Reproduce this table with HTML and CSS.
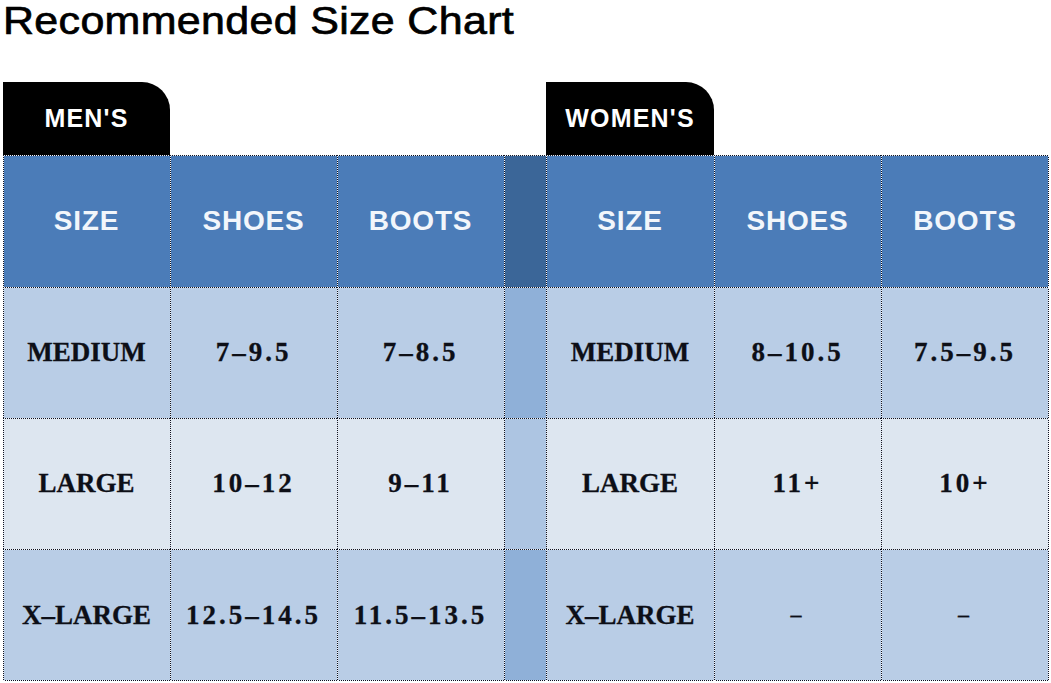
FILE: index.html
```html
<!DOCTYPE html>
<html>
<head>
<meta charset="utf-8">
<link rel="stylesheet" href="styles.css">
</head>
<body>
<h1 class="title">Recommended Size Chart</h1>
<div class="chart">
  <div class="tab tab-men">MEN'S</div>
  <div class="tab-gap"></div>
  <div class="tab tab-women">WOMEN'S</div>
  <div class="tab-gap-end"></div>

  <div class="cell head">SIZE</div>
  <div class="cell head">SHOES</div>
  <div class="cell head">BOOTS</div>
  <div class="cell div-head"></div>
  <div class="cell head">SIZE</div>
  <div class="cell head">SHOES</div>
  <div class="cell head edge">BOOTS</div>

  <div class="cell row-a">MEDIUM</div>
  <div class="cell row-a num">7–9.5</div>
  <div class="cell row-a num">7–8.5</div>
  <div class="cell div-a"></div>
  <div class="cell row-a">MEDIUM</div>
  <div class="cell row-a num">8–10.5</div>
  <div class="cell row-a num edge">7.5–9.5</div>

  <div class="cell row-b">LARGE</div>
  <div class="cell row-b num">10–12</div>
  <div class="cell row-b num">9–11</div>
  <div class="cell div-b"></div>
  <div class="cell row-b">LARGE</div>
  <div class="cell row-b num">11+</div>
  <div class="cell row-b num edge">10+</div>

  <div class="cell row-a last">X–LARGE</div>
  <div class="cell row-a last num">12.5–14.5</div>
  <div class="cell row-a last num">11.5–13.5</div>
  <div class="cell div-a last"></div>
  <div class="cell row-a last">X–LARGE</div>
  <div class="cell row-a last num dash">–</div>
  <div class="cell row-a last num dash edge">–</div>
</div>
</body>
</html>
```

FILE: styles.css
```css
html, body {
  margin: 0;
  padding: 0;
  background: #ffffff;
  overflow: hidden;
}

.title {
  margin: 0;
  padding: 2px 0 0 3px;
  width: max-content;
  font-family: "Liberation Sans", Arial, sans-serif;
  font-weight: normal;
  font-size: 38px;
  line-height: 38px;
  letter-spacing: 0.3px;
  color: #000;
  -webkit-text-stroke: 0.7px #000;
  height: 40px;
  box-sizing: border-box;
  transform: scaleX(1.13);
  transform-origin: 3px 0;
  white-space: nowrap;
}

.chart {
  margin: 42px 0 0 3px;
  display: grid;
  grid-template-columns: 167px 167px 167px 42px 168px 167px 168px;
  grid-template-rows: 73px 132px 131px 131px 132px;
  width: 1046px;
}

.tab {
  background: #000;
  color: #fff;
  border-top-right-radius: 28px;
  display: flex;
  align-items: center;
  justify-content: center;
  font-family: "Liberation Sans", Arial, sans-serif;
  font-weight: bold;
  font-size: 25px;
  letter-spacing: 1.2px;
  padding-bottom: 1px;
}

.tab-men { grid-column: 1; }
.tab-gap { grid-column: 2 / 5; }
.tab-women { grid-column: 5; }
.tab-gap-end { grid-column: 6 / 8; }

.cell {
  --bg: #b9cde6;
  --v: repeating-linear-gradient(to bottom, #0b1020 0 1px, #f4f6fa 1px 2px);
  --h: repeating-linear-gradient(to right, #0b1020 0 1px, #f4f6fa 1px 2px);
  --bottom: linear-gradient(transparent, transparent);
  --right: linear-gradient(transparent, transparent);
  display: flex;
  align-items: center;
  justify-content: center;
  background:
    var(--v) left top / 1px 100% no-repeat,
    var(--h) left top / 100% 1px no-repeat,
    var(--bottom) left bottom / 100% 1px no-repeat,
    var(--right) right top / 1px 100% no-repeat,
    var(--bg);
  font-family: "Liberation Serif", "Times New Roman", serif;
  font-weight: bold;
  font-size: 27px;
  color: #0d0f17;
  -webkit-text-stroke: 0.3px #0d0f17;
}

.last { --bottom: var(--h); }
.edge { --right: var(--v); }

.head {
  --bg: #4b7cb8;
  color: #f2f6fb;
  font-family: "Liberation Sans", Arial, sans-serif;
  font-size: 28px;
  letter-spacing: 0.8px;
  -webkit-text-stroke: 0;
}

.row-a { --bg: #b9cde6; }
.row-b { --bg: #dde6f0; }
.div-head { --bg: #3b6698; }
.div-a { --bg: #8fb0d8; }
.div-b { --bg: #adc5e2; }

.num {
  letter-spacing: 3px;
}

.dash {
  font-size: 22px;
}
```
